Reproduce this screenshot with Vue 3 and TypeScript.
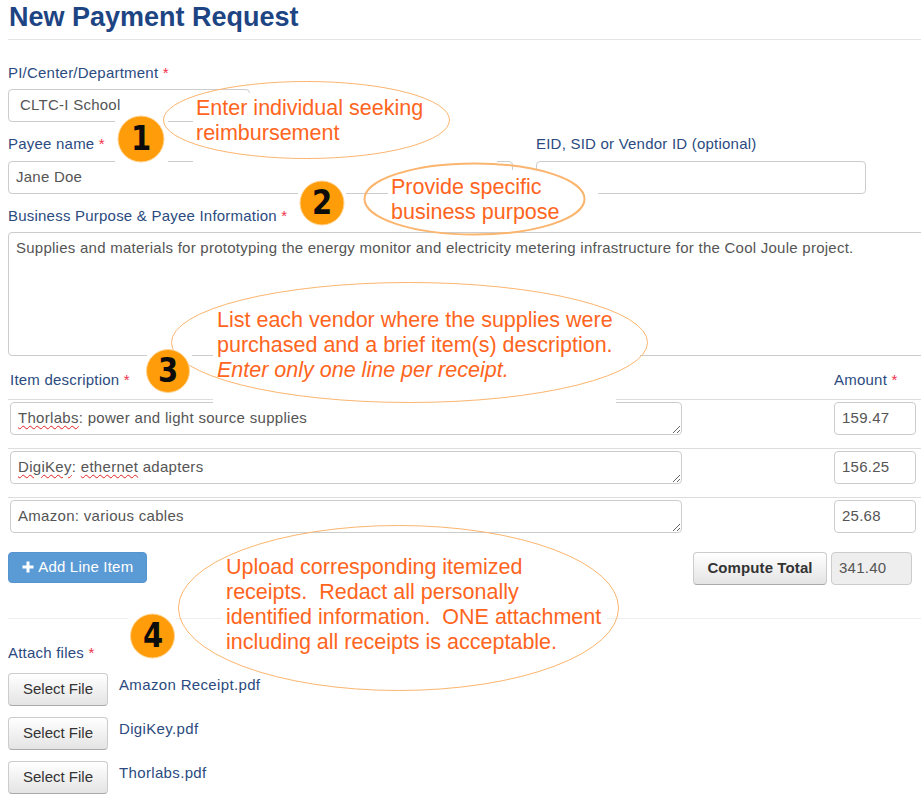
<script setup lang="ts">
interface Line { parts: { text: string; typo?: boolean }[]; amount: string }

const lines: Line[] = [
  { parts: [{ text: 'Thorlabs', typo: true }, { text: ': power and light source supplies' }], amount: '159.47' },
  { parts: [{ text: 'DigiKey', typo: true }, { text: ': ' }, { text: 'ethernet', typo: true }, { text: ' adapters' }], amount: '156.25' },
  { parts: [{ text: 'Amazon: various cables' }], amount: '25.68' },
]
const files: string[] = ['Amazon Receipt.pdf', 'DigiKey.pdf', 'Thorlabs.pdf']

const masks = [
  { left: 115, top: 115, width: 53, height: 50 },
  { left: 193, top: 93, width: 304, height: 72 },
  { left: 298, top: 181, width: 48, height: 40 },
  { left: 388, top: 170, width: 210, height: 60 },
  { left: 147, top: 348, width: 45, height: 46 },
  { left: 213, top: 300, width: 403, height: 105 },
  { left: 616, top: 300, width: 24, height: 80 },
  { left: 128, top: 610, width: 48, height: 48 },
  { left: 222, top: 610, width: 385, height: 20 },
]
const badges = [
  { n: 1, x: 141, y: 139, r: 23 },
  { n: 2, x: 322, y: 203, r: 22 },
  { n: 3, x: 168, y: 371, r: 21.5 },
  { n: 4, x: 152.5, y: 636, r: 22 },
]
const ellipses = [
  { cx: 306.5, cy: 120, rx: 143, ry: 38.5, w: 1 },
  { cx: 474.5, cy: 199, rx: 110, ry: 35.5, w: 2 },
  { cx: 409.5, cy: 342.5, rx: 238, ry: 60, w: 1 },
  { cx: 398.5, cy: 608, rx: 220, ry: 82.5, w: 1 },
]
</script>

<template>
  <div class="page">
    <h1 class="title">New Payment Request</h1>

    <section class="field first">
      <label class="lbl">PI/Center/Department <i class="req">*</i></label>
      <div class="ctl select">CLTC-I School</div>
    </section>

    <section class="two">
      <div class="field">
        <label class="lbl">Payee name <i class="req">*</i></label>
        <div class="ctl">Jane Doe</div>
      </div>
      <div class="field eid">
        <label class="lbl">EID, SID or Vendor ID (optional)</label>
        <div class="ctl"></div>
      </div>
    </section>

    <section class="field purpose">
      <label class="lbl">Business Purpose &amp; Payee Information <i class="req">*</i></label>
      <div class="ctl area">Supplies and materials for prototyping the energy monitor and electricity metering infrastructure for the Cool Joule project.</div>
    </section>

    <div class="items">
      <div class="item-head">
        <span class="lbl">Item description <i class="req">*</i></span>
        <span class="lbl">Amount <i class="req">*</i></span>
      </div>
      <div v-for="(l, i) in lines" :key="i" class="item">
        <div class="ctl desc"><span v-for="(p, j) in l.parts" :key="j" :class="{ typo: p.typo }">{{ p.text }}</span></div>
        <div class="ctl amt">{{ l.amount }}</div>
      </div>
    </div>

    <div class="actions">
      <button class="btn primary" type="button">
        <svg class="plus" viewBox="0 0 12 12" width="12" height="12"><path d="M4.5 0.5h3v4h4v3h-4v4h-3v-4h-4v-3h4z" fill="#fff" /></svg>
        Add Line Item
      </button>
      <div class="total">
        <button class="btn compute" type="button">Compute Total</button>
        <div class="ctl sum">341.40</div>
      </div>
    </div>

    <hr class="sep" />

    <section class="attach">
      <label class="lbl">Attach files <i class="req">*</i></label>
      <div v-for="f in files" :key="f" class="file">
        <button class="btn select-file" type="button">Select File</button>
        <span class="fname">{{ f }}</span>
      </div>
    </section>

    <div class="overlay">
      <div v-for="(m, i) in masks" :key="i" class="mask"
        :style="{ left: m.left + 'px', top: m.top + 'px', width: m.width + 'px', height: m.height + 'px' }"></div>

      <svg class="marks" width="921" height="797" viewBox="0 0 921 797">
        <ellipse v-for="(e, i) in ellipses" :key="i" :cx="e.cx" :cy="e.cy" :rx="e.rx" :ry="e.ry"
          fill="none" stroke="#fbb56e" :stroke-width="e.w" />
        <g v-for="b in badges" :key="b.n">
          <circle :cx="b.x" :cy="b.y" :r="b.r" fill="#ff9c0a" stroke="#ffd596" stroke-width="1" />
        </g>
      </svg>

      <div v-for="b in badges" :key="'n' + b.n" class="digit"
        :style="{ left: b.x - 20 + 'px', top: b.y - 20 + 'px' }">{{ b.n }}</div>

      <div class="note n1">Enter individual seeking<br />reimbursement</div>
      <div class="note n2">Provide specific<br />business purpose</div>
      <div class="note n3">List each vendor where the supplies were<br />purchased and a brief item(s) description.<br /><em>Enter only one line per receipt.</em></div>
      <div class="note n4">Upload corresponding itemized<br />receipts.&nbsp; Redact all personally<br />identified information.&nbsp; ONE attachment<br />including all receipts is acceptable.</div>
    </div>
  </div>
</template>

<style scoped>
.page {
  position: relative;
  width: 921px;
  height: 797px;
  overflow: hidden;
  background: #fff;
  font-family: "Liberation Sans", Arial, sans-serif;
  font-size: 15px;
  line-height: 20px;
  color: #555;
  box-sizing: border-box;
  padding: 0 0 0 8px;
}
.title {
  margin: 0 0 0 1px;
  padding: 0;
  font-size: 27px;
  line-height: 34px;
  font-weight: 700;
  color: #1d4483;
}
.title::after {
  content: "";
  display: block;
  height: 1px;
  margin: 5px 0 0 -1px;
  background: #e5e5e5;
}
.lbl {
  display: block;
  color: #2b4b80;
  letter-spacing: 0.22px;
}
.req {
  font-style: normal;
  color: #f0304a;
}
.field.first { margin-top: 23px; }
.field.first .lbl { margin-bottom: 6px; }
.ctl {
  box-sizing: border-box;
  height: 33px;
  border: 1px solid #ccc;
  border-radius: 4px;
  padding: 5px 7px;
  line-height: 20px;
  background: #fff;
  letter-spacing: 0.25px;
  color: #555;
}
.select { width: 242px; padding-left: 11px; }
.two {
  display: flex;
  margin-top: 12px;
  gap: 23px;
}
.two .field { width: 505px; }
.two .field.eid { width: 330px; }
.two .lbl { margin-bottom: 7px; }
.purpose { margin-top: 12px; }
.purpose .lbl { margin-bottom: 6px; }
.area {
  width: 930px;
  height: 124px;
}
.items { margin-top: 14px; width: 913px; }
.item-head {
  display: flex;
  justify-content: space-between;
  padding: 0 5px 9px 2px;
  border-bottom: 1px solid #ddd;
}
.item-head .lbl:last-child { width: 82px; }
.item {
  display: flex;
  justify-content: space-between;
  padding: 2px 5px 13px 2px;
  border-bottom: 1px solid #ddd;
  height: 49px;
  box-sizing: border-box;
}
.item:last-child { border-bottom: 0; }
.desc {
  width: 672px;
  overflow: auto;
  resize: vertical;
  letter-spacing: 0.3px;
}
.typo {
  text-decoration: underline wavy #e02020 1px;
  text-underline-offset: 2px;
}
.amt { width: 82px; padding-left: 7px; }
.actions {
  display: flex;
  justify-content: space-between;
  margin-top: 5px;
  width: 904px;
}
.btn {
  box-sizing: border-box;
  height: 33px;
  border-radius: 4px;
  font: inherit;
  letter-spacing: 0.1px;
  padding: 0 0 2px;
  cursor: pointer;
}
.primary {
  width: 139px;
  height: 31px;
  background: #5b9bd5;
  border: 1px solid #5594d0;
  color: #fff;
  letter-spacing: 0.2px;
}
.plus { vertical-align: -1px; margin-right: 1px; }
.total { display: flex; gap: 4px; }
.compute {
  width: 134px;
  font-weight: 700;
  color: #333;
  border: 1px solid #ccc;
  border-bottom-color: #aaa;
  background: linear-gradient(#fff, #e4e4e4);
}
.sum {
  width: 81px;
  background: #eee;
  padding-left: 7px;
}
.sep {
  border: 0;
  height: 1px;
  margin: 33px 0 0 0;
  background: #eee;
}
.attach { margin-top: 24px; }
.attach .lbl { margin-bottom: 10px; }
.file {
  display: flex;
  align-items: flex-start;
  margin-bottom: 11px;
  gap: 11px;
}
.select-file {
  width: 100px;
  height: 33px;
  color: #333;
  border: 1px solid #ccc;
  border-bottom-color: #aaa;
  background: linear-gradient(#fff, #e4e4e4);
  letter-spacing: 0;
}
.fname {
  color: #2b4b80;
  letter-spacing: 0.35px;
  line-height: 20px;
  margin-top: 2px;
}
.overlay {
  position: absolute;
  inset: 0;
  pointer-events: none;
}
.mask {
  position: absolute;
  background: #fff;
}
.marks {
  position: absolute;
  left: 0;
  top: 0;
}
.digit {
  position: absolute;
  width: 40px;
  height: 40px;
  line-height: 40px;
  text-align: center;
  font-family: "DejaVu Sans", sans-serif;
  font-weight: 700;
  font-size: 33px;
  color: #0c0c0c;
  transform: scaleX(0.88);
}
.note {
  position: absolute;
  font-size: 21.5px;
  line-height: 25px;
  color: #ff6520;
  white-space: nowrap;
}
.n1 { left: 196px; top: 96px; }
.n2 { left: 391px; top: 175px; }
.n3 { left: 217px; top: 308px; }
.n4 { left: 226px; top: 555px; }
</style>
